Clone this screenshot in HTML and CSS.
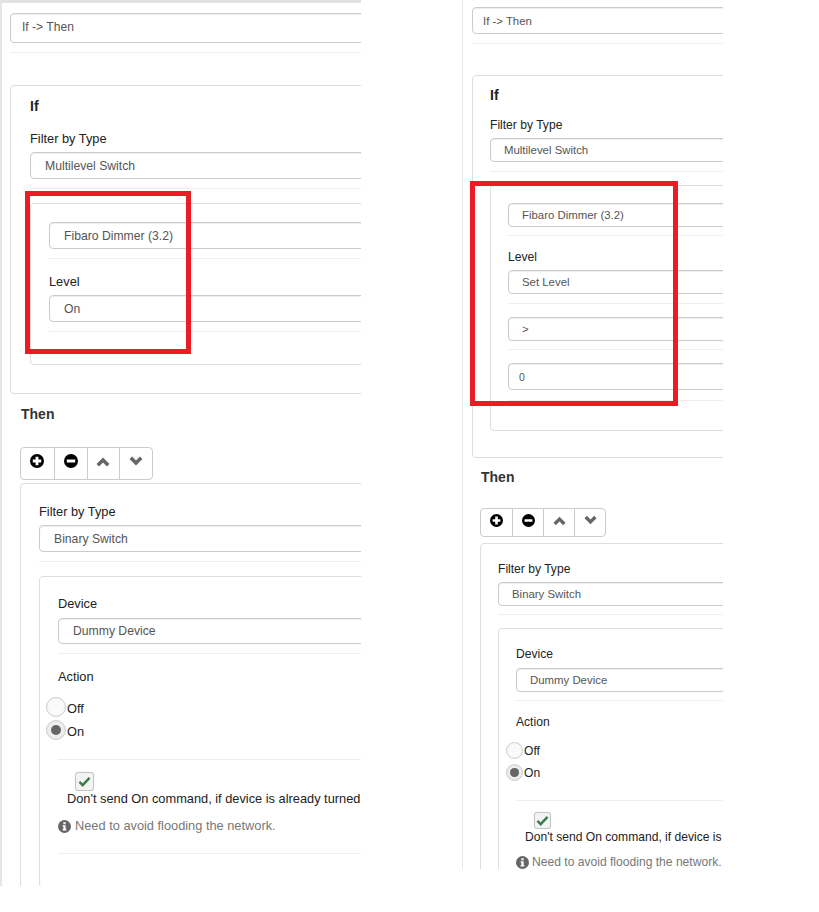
FILE: index.html
```html
<!DOCTYPE html>
<html lang="en">
<head>
<meta charset="utf-8">
<title>If -&gt; Then</title>
<link rel="stylesheet" href="styles.css">
</head>
<body>
<svg class="defs" aria-hidden="true">
  <symbol id="i-plus" viewBox="0 0 14 14"><path fill-rule="evenodd" d="M7 0a7 7 0 1 1 0 14A7 7 0 0 1 7 0zM5.600 2.800v2.800H2.800v2.800h2.800v2.800h2.800V8.400h2.800V5.600H8.400V2.800z"/></symbol>
  <symbol id="i-minus" viewBox="0 0 14 14"><path fill-rule="evenodd" d="M7 0a7 7 0 1 1 0 14A7 7 0 0 1 7 0zM2.800 5.600v2.800h8.400V5.600z"/></symbol>
  <symbol id="i-up" viewBox="0 0 14 10"><path d="M1.800 8.200L7 3l5.200 5.200" fill="none" stroke="currentColor" stroke-width="3.600"/></symbol>
  <symbol id="i-down" viewBox="0 0 14 10"><path d="M1.800 1.800L7 7l5.200-5.200" fill="none" stroke="currentColor" stroke-width="3.600"/></symbol>
  <symbol id="i-check" viewBox="0 0 14 12"><path d="M1.500 6.500L5 10l7.500-8" fill="none" stroke="#3f7a4a" stroke-width="2.600"/></symbol>
  <symbol id="i-info" viewBox="0 0 14 14"><path fill-rule="evenodd" d="M7 0a7 7 0 1 1 0 14A7 7 0 0 1 7 0zM5.800 2.500v2h2.400v-2zM5 5.700v1.300h.8v2.800H5v1.500h4V9.800h-.8V5.700z"/></symbol>
</svg>
<main class="canvas">

  <section class="panel panel-left">
    <div class="sel sel-top mt-10">If -&gt; Then</div>
    <hr class="rule mt-9">
    <div class="box box-if mt-32">
      <h4 class="title mt-13">If</h4>
      <div class="label mt-16">Filter by Type</div>
      <div class="sel mt-6">Multilevel Switch</div>
      <hr class="rule mt-9">
      <div class="box box-nested mt-14">
        <div class="sel mt-18">Fibaro Dimmer (3.2)</div>
        <hr class="rule mt-9">
        <div class="label mt-14">Level</div>
        <div class="sel mt-6">On</div>
        <hr class="rule mt-9">
      </div>
    </div>
    <h4 class="title then mt-13">Then</h4>
    <div class="btns mt-25">
      <span class="btn"><svg class="ico ico-round"><use href="#i-plus"/></svg></span>
      <span class="btn"><svg class="ico ico-round"><use href="#i-minus"/></svg></span>
      <span class="btn"><svg class="ico ico-chev"><use href="#i-up"/></svg></span>
      <span class="btn"><svg class="ico ico-chev chev-down"><use href="#i-down"/></svg></span>
    </div>
    <div class="box box-then mt-3">
      <div class="label mt-19">Filter by Type</div>
      <div class="sel mt-6">Binary Switch</div>
      <hr class="rule mt-9">
      <div class="box box-nested box-end mt-14">
        <div class="label mt-18">Device</div>
        <div class="sel sel-dev mt-7">Dummy Device</div>
        <hr class="rule mt-9">
        <div class="label mt-14">Action</div>
        <div class="radio mt-13"><span class="dot"></span><span class="radio-text">Off</span></div>
        <div class="radio mt-3"><span class="dot on"></span><span class="radio-text">On</span></div>
        <hr class="rule mt-19">
        <div class="check mt-12"><svg class="tick"><use href="#i-check"/></svg></div>
        <div class="check-text">Don't send On command, if device is already turned</div>
        <div class="help mt-11"><svg class="info"><use href="#i-info"/></svg><span>Need to avoid flooding the network.</span></div>
        <hr class="rule mt-19">
      </div>
    </div>
    <div class="mark"></div>
  </section>

  <section class="panel panel-right">
    <div class="sel sel-top mt-7">If -&gt; Then</div>
    <hr class="rule mt-9">
    <div class="box box-if mt-31">
      <h4 class="title mt-12">If</h4>
      <div class="label mt-14">Filter by Type</div>
      <div class="sel mt-5">Multilevel Switch</div>
      <hr class="rule mt-9">
      <div class="box box-nested mt-13">
        <div class="sel mt-17">Fibaro Dimmer (3.2)</div>
        <hr class="rule mt-8">
        <div class="label mt-13">Level</div>
        <div class="sel mt-5">Set Level</div>
        <hr class="rule mt-9">
        <div class="sel mt-13">&gt;</div>
        <hr class="rule mt-8">
        <div class="sel sel-input mt-13">0</div>
        <hr class="rule mt-10">
      </div>
    </div>
    <h4 class="title then mt-12">Then</h4>
    <div class="btns mt-23">
      <span class="btn"><svg class="ico ico-round"><use href="#i-plus"/></svg></span>
      <span class="btn"><svg class="ico ico-round"><use href="#i-minus"/></svg></span>
      <span class="btn"><svg class="ico ico-chev"><use href="#i-up"/></svg></span>
      <span class="btn"><svg class="ico ico-chev chev-down"><use href="#i-down"/></svg></span>
    </div>
    <div class="box box-then mt-6">
      <div class="label mt-17">Filter by Type</div>
      <div class="sel mt-5">Binary Switch</div>
      <hr class="rule mt-8">
      <div class="box box-nested box-end mt-13">
        <div class="label mt-17">Device</div>
        <div class="sel mt-6">Dummy Device</div>
        <hr class="rule mt-8">
        <div class="label mt-13">Action</div>
        <div class="radio mt-12"><span class="dot"></span><span class="radio-text">Off</span></div>
        <div class="radio mt-5"><span class="dot on"></span><span class="radio-text">On</span></div>
        <hr class="rule mt-19">
        <div class="check mt-11"><svg class="tick"><use href="#i-check"/></svg></div>
        <div class="check-text">Don't send On command, if device is</div>
        <div class="help mt-9"><svg class="info"><use href="#i-info"/></svg><span>Need to avoid flooding the network.</span></div>
      </div>
    </div>
    <div class="mark"></div>
  </section>

</main>
</body>
</html>
```

FILE: styles.css
```css
* { box-sizing: border-box; }

html, body { margin: 0; background: #fff; }

body {
  font-family: "Liberation Sans", Arial, sans-serif;
  color: #222;
}

.defs { display: none; }

.canvas {
  display: flex;
  align-items: flex-start;
}

/* Each cropped screenshot */
.panel {
  position: relative;
  overflow: hidden;
  flex: none;
  background: #fff;
}

.panel-left {
  width: 361px;
  height: 886px;
  border-top: 3px solid #e2e2e2;
  border-left: 2px solid #e6e6e6;
  padding-left: 8px;
  --label: 12.8px;
  --label-lh: 18px;
  --label-mb: -2px;
  --sel: 12.2px;
  --top: 12.1px;
  --sel-h: 27px;
  --sel-pad: 14px;
  --top-h: 30px;
  --top-pad: 11px;
  --top-pb: 2px;
  --pad: 18px;
  --if-pad: 19px;
  --inner-w: 680px;
  --then-x: 11px;
  --btn-x: 10px;
  --btn-w: 32.8px;
  --btn-h: 33px;
  --round: 14px;
  --chev: 14px;
  --radio: 20px;
  --radio-x: -12px;
  --check: 19px;
  --check-x: 17px;
  --info: 13px;
  --help-gap: 4px;
}

.panel-right {
  width: 261px;
  height: 869px;
  margin-left: 101px;
  border-left: 1px solid #e6e6e6;
  padding-left: 9px;
  --label: 12.1px;
  --label-lh: 16px;
  --label-mb: 0px;
  --sel: 11.4px;
  --top: 11.4px;
  --sel-h: 24px;
  --sel-pad: 13px;
  --top-h: 27px;
  --top-pad: 10px;
  --top-pb: 0px;
  --pad: 17px;
  --if-pad: 17px;
  --inner-w: 680px;
  --then-x: 9px;
  --btn-x: 8px;
  --btn-w: 31px;
  --btn-h: 29px;
  --round: 13px;
  --chev: 13px;
  --radio: 17px;
  --radio-x: -10px;
  --check: 17px;
  --check-x: 18px;
  --info: 13px;
  --help-gap: 3px;
}

/* Spacing steps */
.mt-3 { margin-top: 3px; }
.mt-5 { margin-top: 5px; }
.mt-6 { margin-top: 6px; }
.mt-7 { margin-top: 7px; }
.mt-8 { margin-top: 8px; }
.mt-9 { margin-top: 9px; }
.mt-10 { margin-top: 10px; }
.mt-11 { margin-top: 11px; }
.mt-12 { margin-top: 12px; }
.mt-13 { margin-top: 13px; }
.mt-14 { margin-top: 14px; }
.mt-16 { margin-top: 16px; }
.mt-17 { margin-top: 17px; }
.mt-18 { margin-top: 18px; }
.mt-19 { margin-top: 19px; }
.mt-23 { margin-top: 23px; }
.mt-25 { margin-top: 25px; }
.mt-31 { margin-top: 31px; }
.mt-32 { margin-top: 32px; }

/* Form pieces */
.sel {
  display: flex;
  align-items: center;
  width: var(--inner-w);
  height: var(--sel-h);
  padding-left: var(--sel-pad);
  border: 1px solid #ccc;
  border-radius: 4px;
  box-shadow: inset 0 1px 1px rgba(0, 0, 0, .075);
  background: #fff;
  color: #555;
  font-size: var(--sel);
  white-space: nowrap;
}

.sel-top {
  height: var(--top-h);
  padding-left: var(--top-pad);
  padding-bottom: var(--top-pb);
  font-size: var(--top);
}

.sel-dev { height: 26px; }

.sel-input {
  height: 27px;
  padding-left: 10px;
  font-size: 10.500px;
}

.rule {
  display: block;
  width: var(--inner-w);
  height: 1px;
  margin-bottom: 0;
  margin-left: 0;
  margin-right: 0;
  border: 0;
  background: #eee;
}

.box {
  width: 760px;
  padding-left: var(--pad);
  border: 1px solid #ddd;
  border-radius: 4px;
  background: #fff;
}

.box-if { padding-left: var(--if-pad); }
.panel-left .box-if { padding-bottom: 28px; }
.panel-right .box-if { padding-bottom: 26px; }
.panel-left .box-if > .box-nested { padding-bottom: 32px; }
.panel-right .box-if > .box-nested { padding-bottom: 29px; }
.panel-left .box-end { padding-bottom: 33px; }
.panel-right .box-end { padding-bottom: 30px; }
.box-then { margin-left: var(--btn-x); }

.title {
  margin-bottom: 0;
  font-size: 14px;
  line-height: 15px;
  font-weight: 700;
  color: #222;
}

.then {
  margin-left: var(--then-x);
  color: #333;
}

.label {
  margin-bottom: var(--label-mb);
  font-size: var(--label);
  line-height: var(--label-lh);
  color: #222;
}

/* Button group */
.btns {
  display: flex;
  width: max-content;
  margin-left: var(--btn-x);
  border: 1px solid #ccc;
  border-radius: 4px;
  background: #fff;
}

.btn {
  display: flex;
  align-items: center;
  justify-content: center;
  width: var(--btn-w);
  height: calc(var(--btn-h) - 2px);
  border-left: 1px solid #ccc;
}

.btn:first-child { border-left: 0; }

.ico { display: block; }

.ico-round {
  width: var(--round);
  height: var(--round);
  margin-bottom: 5px;
  fill: #000;
}

.ico-chev {
  width: var(--chev);
  height: 10px;
  margin-bottom: 4px;
  color: #666;
}

.chev-down { margin-bottom: 6px; }

/* Radios */
.radio {
  display: flex;
  align-items: center;
  gap: 1px;
  margin-left: var(--radio-x);
  height: var(--radio);
  font-size: var(--label);
  color: #222;
}

.panel-left .radio-text { padding-top: 2px; }

.dot {
  display: flex;
  align-items: center;
  justify-content: center;
  width: var(--radio);
  height: var(--radio);
  flex: none;
  border: 1px solid #ccc;
  border-radius: 50%;
  background: #fafafa;
  box-shadow: inset 0 0 2px rgba(0, 0, 0, .06);
}

.dot.on { background: #eee; }

.dot.on::after {
  content: "";
  width: 56%;
  height: 56%;
  border-radius: 50%;
  background: #666;
}

/* Checkbox */
.check {
  display: flex;
  align-items: center;
  justify-content: center;
  width: var(--check);
  height: var(--check);
  margin-left: var(--check-x);
  border: 1px solid #c4c4c4;
  border-radius: 3px;
  background: #f2f4f4;
  box-shadow: 0 0 1px rgba(0, 0, 0, .15);
}

.tick {
  width: 13px;
  height: 11px;
}

.check-text {
  margin-left: 9px;
  font-size: var(--label);
  line-height: 16px;
  color: #222;
  white-space: nowrap;
}

.help {
  display: flex;
  align-items: center;
  gap: var(--help-gap);
  font-size: var(--label);
  line-height: 16px;
  color: #777;
  white-space: nowrap;
}

.info {
  width: var(--info);
  height: var(--info);
  flex: none;
  fill: #666;
}

/* Red annotation frames drawn over the screenshots */
.mark {
  position: absolute;
  border: 5px solid #ed1c24;
}

.panel-left .mark {
  left: 23px;
  top: 188px;
  width: 166px;
  height: 163px;
}

.panel-right .mark {
  left: 7px;
  top: 181px;
  width: 208px;
  height: 225px;
}
```
